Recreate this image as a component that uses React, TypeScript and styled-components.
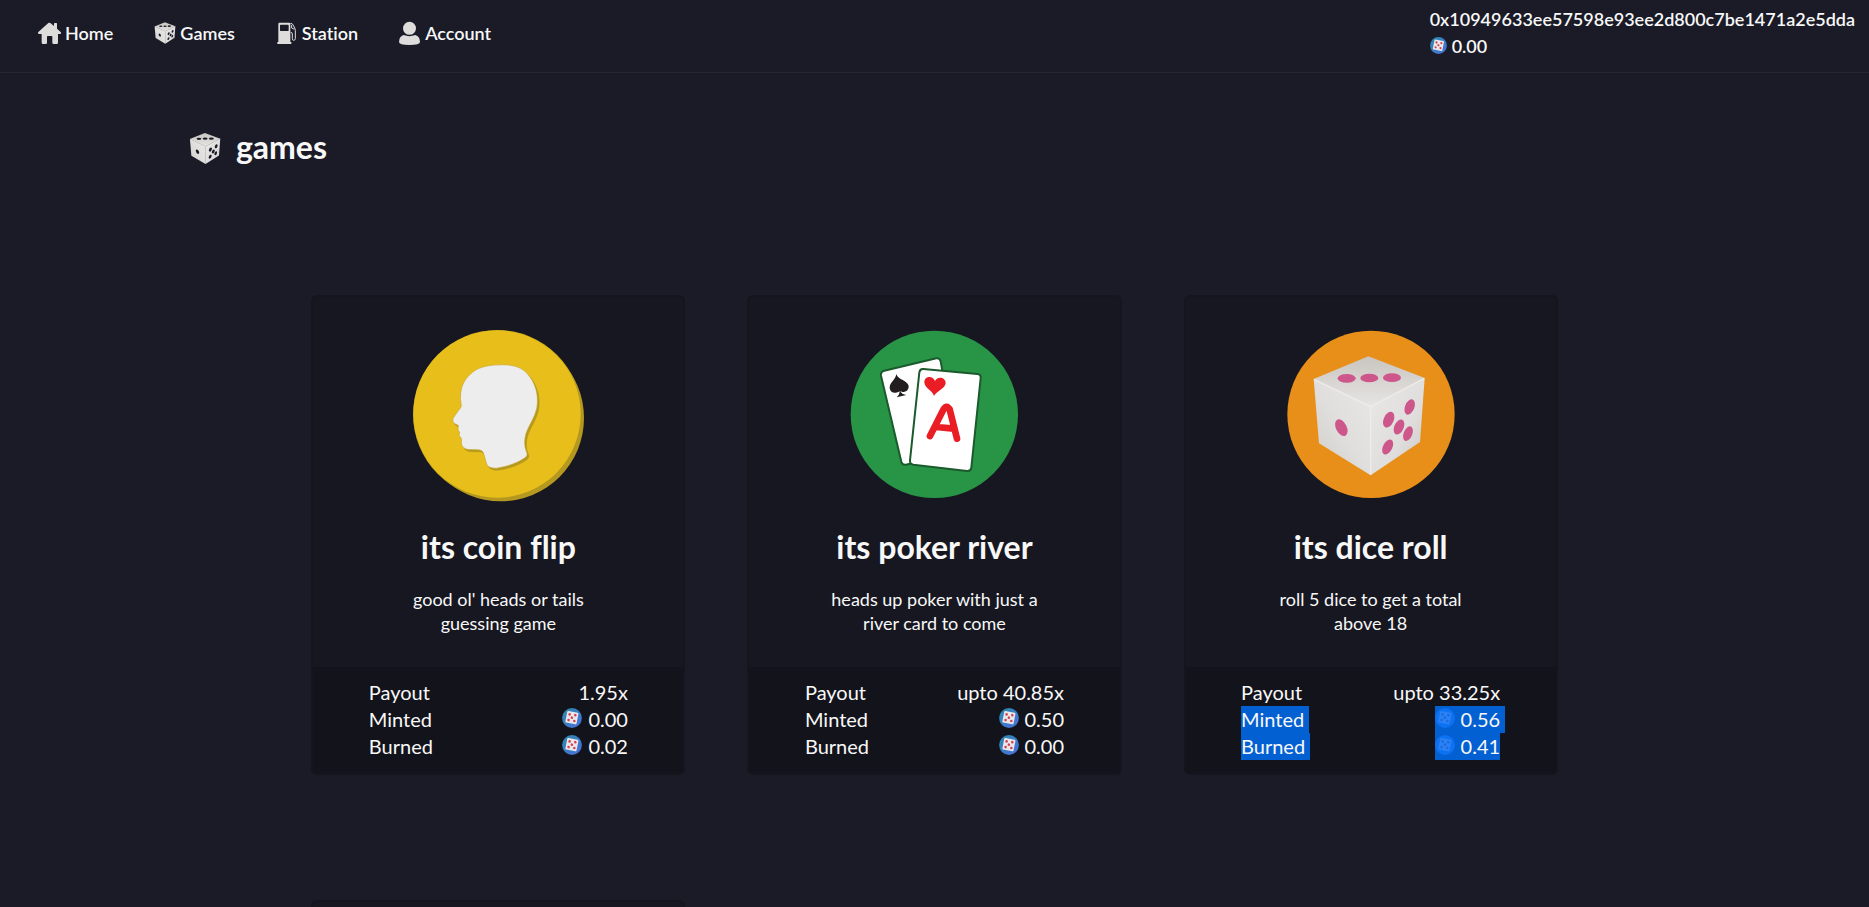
import React, { useId } from "react";
import styled, { createGlobalStyle, css } from "styled-components";

const GlobalStyle = createGlobalStyle`
  * { box-sizing: border-box; }
  html { scrollbar-width: none; }
  body {
    margin: 0;
    background: #1a1b27;
    color: #f8f8f8;
    font-family: Lato, "Noto Sans", sans-serif;
    font-size: 18px;
    line-height: 27px;
    font-variant-ligatures: none;
  }
`;

const Page = styled.div`
  display: flex;
  flex-direction: column;
  height: 100vh;
  overflow-y: auto;
  scrollbar-width: none;
`;

const Header = styled.header`
  display: flex;
  flex-shrink: 0;
  align-items: center;
  justify-content: space-between;
  padding: 6px 14px 12px 38px;
  border-bottom: 1px solid #242631;
  font-weight: 600;
`;

const Nav = styled.nav`
  display: flex;
  gap: 40px;
`;

const NavLink = styled.a`
  display: flex;
  align-items: center;
  gap: 3px;
  color: inherit;
  text-decoration: none;
`;

const NavIcon = styled.svg`
  width: 24px;
  height: 24px;
  fill: #dedddc;
`;

const Wallet = styled.div`
  display: flex;
  flex-direction: column;
  align-items: flex-start;
`;

const Balance = styled.span`
  display: inline-flex;
  align-items: center;
  gap: 5px;
`;

const TokenSvg = styled.svg<{ $size: number }>`
  flex: none;
  width: ${(p) => p.$size}px;
  height: ${(p) => p.$size}px;
  margin-bottom: 3px;
`;

const Main = styled.main`
  padding-top: 54px;
`;

const Heading = styled.div`
  display: flex;
  align-items: flex-end;
  gap: 13px;
  margin-left: 10%;
`;

const HeadingIcon = styled.svg`
  width: 36px;
  height: 36px;
`;

const PageTitle = styled.h1`
  margin: 0;
  font-size: 32px;
  line-height: 40px;
  font-weight: 700;
`;

const Grid = styled.section`
  display: grid;
  grid-template-columns: repeat(3, minmax(0, 1fr));
  gap: 125px 62px;
  width: 70%;
  margin: 128px auto 125px;
  padding: 0 31px;
`;

const Card = styled.article`
  display: flex;
  flex-direction: column;
  min-height: 480px;
  border: 2px solid #15151e;
  border-radius: 6px;
  background: #171721;
  overflow: hidden;
`;

const CardBody = styled.div`
  display: flex;
  flex-direction: column;
  align-items: center;
  padding: 33px 0 32px;
  text-align: center;
`;

const Art = styled.svg`
  width: 172px;
  height: 172px;
`;

const CardTitle = styled.h2`
  margin: 25px 0 20px;
  font-size: 32px;
  line-height: 40px;
  font-weight: 700;
`;

const Description = styled.p`
  width: 60%;
  margin: 0;
  line-height: 24px;
`;

const Stats = styled.dl`
  flex: 1;
  margin: 0;
  padding: 12px 15% 13px;
  background: #13131b;
  font-size: 20px;
`;

const Stat = styled.div`
  display: flex;
  justify-content: space-between;
`;

const selection = css`
  background: #0360d3;
`;

const StatLabel = styled.dt<{ $selected?: boolean }>`
  padding-right: 5px;
  ${(p) => p.$selected && selection}
`;

const StatValue = styled.dd<{ $selected?: boolean; $trailing?: boolean }>`
  display: flex;
  align-items: center;
  gap: 6px;
  margin: 0 ${(p) => (p.$trailing ? "-5px" : "0")} 0 0;
  padding-right: ${(p) => (p.$trailing ? "5px" : "0")};
  ${(p) => p.$selected && selection}
`;

function Token({ size = 20, selected = false }: { size?: number; selected?: boolean }) {
  const id = useId();
  const pip = selected ? "#1c69d9" : "#d8404f";
  return (
    <TokenSvg $size={size} viewBox="0 0 20 20" aria-hidden="true">
      <defs>
        <linearGradient id={id} x1="0" y1="0" x2="1" y2="1">
          <stop offset="0" stopColor="#2a8ba9" />
          <stop offset="1" stopColor="#4b6ee0" />
        </linearGradient>
      </defs>
      <circle cx="10" cy="10" r="9.9" fill={selected ? "#0c72f2" : `url(#${id})`} />
      <g transform="rotate(11 10 9.7)">
        <rect x="4.2" y="3.8" width="11.4" height="11.8" rx="1" fill={selected ? "#2a82f6" : "#e8e8ec"} />
        <g fill={pip}>
          <circle cx="7" cy="6.9" r="1.3" />
          <circle cx="12.8" cy="6.6" r="1.3" />
          <circle cx="9.9" cy="9.7" r="1.3" />
          <circle cx="7.1" cy="12.7" r="1.3" />
          <circle cx="12.9" cy="12.5" r="1.3" />
        </g>
      </g>
    </TokenSvg>
  );
}

function Die({ pip }: { pip: string }) {
  const id = useId();
  return (
    <>
      <defs>
        <linearGradient id={`${id}t`} x1="0" y1="0" x2="0" y2="1">
          <stop offset="0" stopColor="#c9c5c0" />
          <stop offset="1" stopColor="#e6e5e3" />
        </linearGradient>
        <linearGradient id={`${id}l`} x1="1" y1="0" x2="0" y2="1">
          <stop offset="0" stopColor="#e8e7e5" />
          <stop offset="0.5" stopColor="#e0dfdd" />
          <stop offset="1" stopColor="#cfcdc9" />
        </linearGradient>
        <linearGradient id={`${id}r`} x1="0" y1="0" x2="1" y2="1">
          <stop offset="0" stopColor="#e9e8e6" />
          <stop offset="0.6" stopColor="#dfdedc" />
          <stop offset="1" stopColor="#c9c8c5" />
        </linearGradient>
      </defs>
      <path d="M415 294L579 226L748 291L586 377Z" fill={`url(#${id}t)`} />
      <path d="M415 294L586 377L586 583L431 487Z" fill={`url(#${id}l)`} />
      <path d="M586 377L748 291L734 483L586 583Z" fill={`url(#${id}r)`} />
      <path d="M416 295L586 377L747 292M586 377V581" fill="none" stroke="#edece9" strokeWidth="4" />
      <g fill={pip}>
        <ellipse cx="514" cy="292" rx="27" ry="13" />
        <ellipse cx="582" cy="291" rx="27" ry="13" />
        <ellipse cx="650" cy="290" rx="27" ry="13" />
        <ellipse cx="498" cy="440" rx="16" ry="27" transform="rotate(-27 498 440)" />
        <ellipse cx="703" cy="378" rx="14" ry="24" transform="rotate(22 703 378)" />
        <ellipse cx="640" cy="416" rx="15" ry="25" transform="rotate(24 640 416)" />
        <ellipse cx="671" cy="438" rx="14" ry="24" transform="rotate(24 671 438)" />
        <ellipse cx="698" cy="458" rx="13" ry="23" transform="rotate(22 698 458)" />
        <ellipse cx="637" cy="498" rx="14" ry="24" transform="rotate(27 637 498)" />
      </g>
    </>
  );
}

const HEAD =
  "M601 252C573 252 541 257 521 272C496 291 483 314 482 346C481 356 485 368 484 378C480 386 466 401 460 413C457 421 460 428 468 431L475 434C476 440 473 446 476 450L480 457C476 462 478 466 482 470C487 476 484 484 485 490C487 500 495 506 506 507L536 508C543 509 548 511 551 517C555 529 558 545 563 555C569 562 580 564 592 563C622 559 655 547 676 532C684 526 684 520 680 512C674 497 674 478 679 460C687 435 706 411 712 382C716 355 713 331 703 309C692 284 672 261 642 255C628 252 614 251 601 252Z";

function CoinArt() {
  return (
    <Art viewBox="336 147 518 518" aria-hidden="true">
      <circle cx="603" cy="412" r="251" fill="#b49820" />
      <circle cx="593" cy="401" r="254" fill="#b49820" />
      <circle cx="592" cy="400" r="252" fill="#e8bf1a" />
      <path d={HEAD} fill="#b49820" stroke="#b49820" strokeWidth="2" transform="translate(5 6)" />
      <path d={HEAD} fill="#ededed" stroke="#c9a628" strokeWidth="2" />
    </Art>
  );
}

function PokerArt() {
  return (
    <Art viewBox="325 147 516 516" aria-hidden="true">
      <circle cx="584" cy="400" r="251" fill="#289446" />
      <g fill="#fff" stroke="#1b5a2c" strokeWidth="6" strokeLinejoin="round">
        <path d="M434 269L590 232Q600 230 603 241L650 500Q652 512 640 516L499 551Q488 553 485 542L424 284Q422 272 434 269Z" />
        <path d="M551 264L713 279Q724 280 723 291L695 560Q694 571 682 570L521 551Q510 549 511 538L539 274Q541 263 551 264Z" />
      </g>
      <path
        d="M470 279C474 296 505 299 507 315C508 332 490 337 482 329C484 337 491 340 500 342L471 349C476 344 480 339 480 331C472 338 451 338 450 320C450 304 468 296 470 279Z"
        fill="#221d1f"
      />
      <path
        d="M583 345C579 329 554 321 554 304C554 286 578 282 586 300C595 284 618 290 618 306C617 323 590 330 583 345Z"
        fill="#ea1d25"
      />
      <path
        d="M571 465L612 384Q621 370 630 385L652 473M590 438L642 443"
        fill="none"
        stroke="#ea1d25"
        strokeWidth="20"
        strokeLinecap="round"
        strokeLinejoin="round"
      />
    </Art>
  );
}

function DiceArt() {
  return (
    <Art viewBox="329 147 516 516" aria-hidden="true">
      <circle cx="587" cy="400" r="251" fill="#e88f19" />
      <Die pip="#cd578b" />
    </Art>
  );
}

interface Game {
  title: string;
  text: string;
  art: React.ReactNode;
  payout: string;
  minted: string;
  burned: string;
  selected?: boolean;
}

const games: Game[] = [
  {
    title: "its coin flip",
    text: "good ol' heads or tails guessing game",
    art: <CoinArt />,
    payout: "1.95x",
    minted: "0.00",
    burned: "0.02",
  },
  {
    title: "its poker river",
    text: "heads up poker with just a river card to come",
    art: <PokerArt />,
    payout: "upto 40.85x",
    minted: "0.50",
    burned: "0.00",
  },
  {
    title: "its dice roll",
    text: "roll 5 dice to get a total above 18",
    art: <DiceArt />,
    payout: "upto 33.25x",
    minted: "0.56",
    burned: "0.41",
    selected: true,
  },
];

function GameCard({ title, text, art, payout, minted, burned, selected }: Game) {
  return (
    <Card>
      <CardBody>
        {art}
        <CardTitle>{title}</CardTitle>
        <Description>{text}</Description>
      </CardBody>
      <Stats>
        <Stat>
          <StatLabel>Payout</StatLabel>
          <StatValue>{payout}</StatValue>
        </Stat>
        <Stat>
          <StatLabel $selected={selected}>Minted</StatLabel>
          <StatValue $selected={selected} $trailing>
            <Token selected={selected} />
            {minted}
          </StatValue>
        </Stat>
        <Stat>
          <StatLabel $selected={selected}>Burned</StatLabel>
          <StatValue $selected={selected}>
            <Token selected={selected} />
            {burned}
          </StatValue>
        </Stat>
      </Stats>
    </Card>
  );
}

export default function App() {
  return (
    <>
      <GlobalStyle />
      <Page>
        <Header>
          <Nav>
            <NavLink href="#home">
              <NavIcon viewBox="114 63 72 72" aria-hidden="true">
                <path d="M145 69Q148 67 151 69L162 78V71Q162 69 164 69H169Q171 69 171 71V86L182 96Q185 100 181 102H174V128Q174 132 170 132H161Q157 132 157 128V110Q157 108 155 108H143Q141 108 141 110V128Q141 132 137 132H129Q125 132 125 128V102H117Q112 100 115 96Z" />
              </NavIcon>
              Home
            </NavLink>
            <NavLink href="#games">
              <NavIcon viewBox="389 204 385 401" preserveAspectRatio="none" aria-hidden="true">
                <Die pip="#1a1b27" />
              </NavIcon>
              Games
            </NavLink>
            <NavLink href="#station">
              <NavIcon viewBox="819 63 72 72" aria-hidden="true">
                <path
                  fillRule="evenodd"
                  d="M832 68H861Q865 68 865 72V126H868V132H826V126H829V72Q829 68 832 68ZM836 74Q834 74 834 76V91Q834 93 836 93H858Q860 93 860 91V76Q860 74 858 74Z"
                />
                <path
                  d="M865 70Q872 70 874 76L878 84Q880 87 880 92V115Q880 121 875 121Q871 121 871 116V102Q871 97 866 97M869 75V84L877 88"
                  fill="none"
                  stroke="#dedddc"
                  strokeWidth="3"
                />
              </NavIcon>
              Station
            </NavLink>
            <NavLink href="#account">
              <NavIcon viewBox="1191 63 72 72" aria-hidden="true">
                <circle cx="1225.5" cy="85" r="19.5" />
                <path d="M1208 105Q1225 112 1243 105Q1257 109 1257 126Q1257 135 1225 135Q1194 135 1194 126Q1194 109 1208 105Z" />
              </NavIcon>
              Account
            </NavLink>
          </Nav>
          <Wallet>
            <span>0x10949633ee57598e93ee2d800c7be1471a2e5dda</span>
            <Balance>
              <Token size={17} />
              0.00
            </Balance>
          </Wallet>
        </Header>
        <Main>
          <Heading>
            <HeadingIcon viewBox="383 202 395 415" preserveAspectRatio="none" aria-hidden="true">
              <Die pip="#1a1b27" />
            </HeadingIcon>
            <PageTitle>games</PageTitle>
          </Heading>
          <Grid>
            {games.map((game) => (
              <GameCard key={game.title} {...game} />
            ))}
            <Card />
          </Grid>
        </Main>
      </Page>
    </>
  );
}
